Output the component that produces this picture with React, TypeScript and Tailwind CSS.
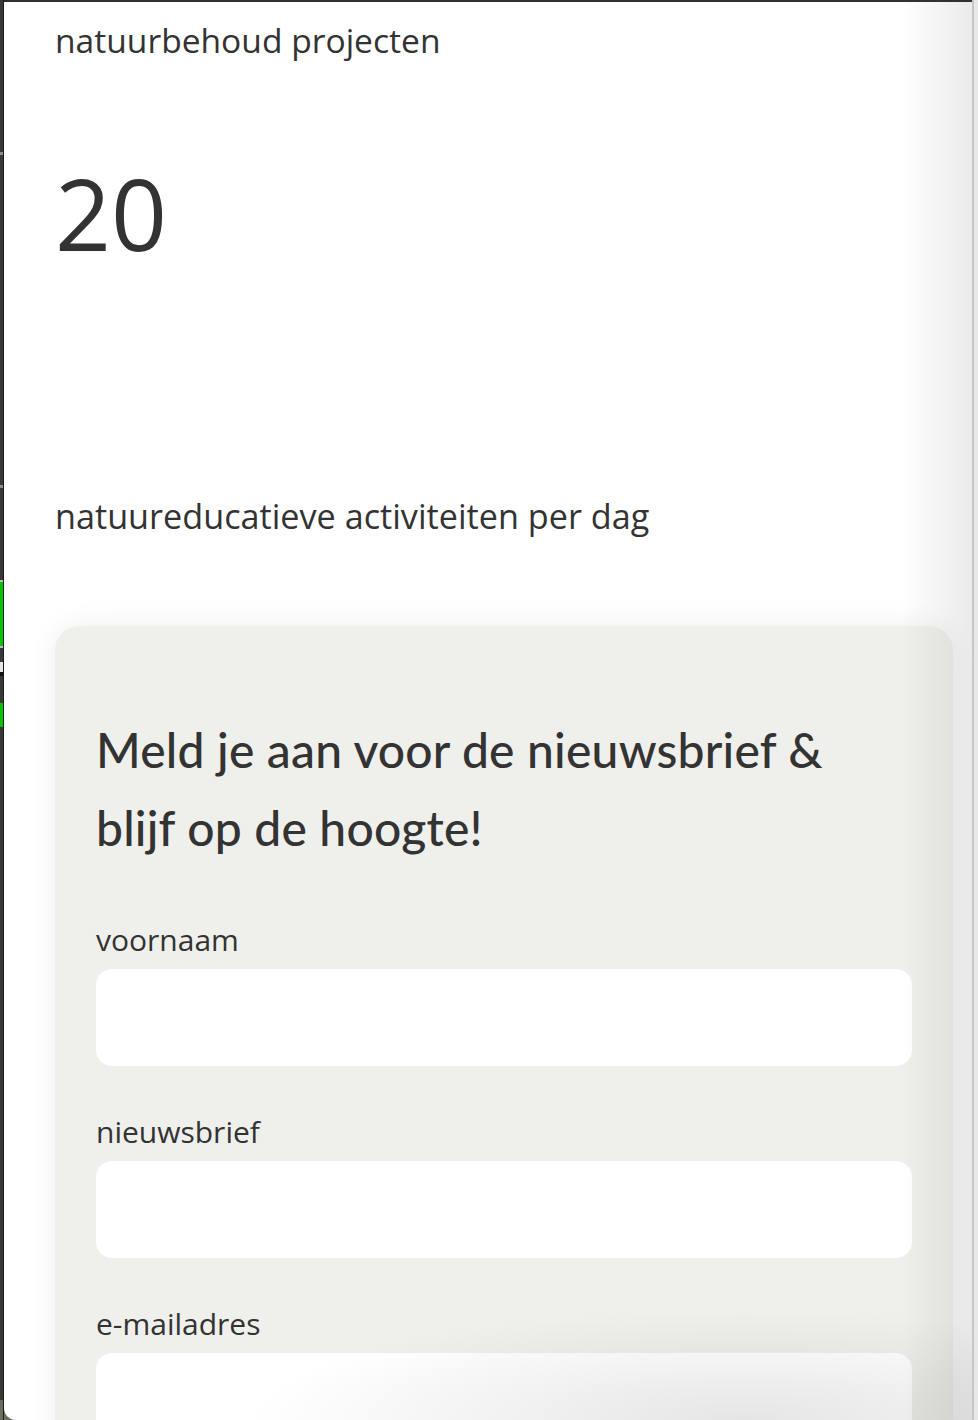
import React from 'react';

// Linker rand: stukje van het venster erachter
const RAND_SEGMENTEN = [
  { h: 'h-[152px]', kleur: 'bg-[#383838]' },
  { h: 'h-[3px]', kleur: 'bg-[#8a8a8a]' },
  { h: 'h-[330px]', kleur: 'bg-[#383838]' },
  { h: 'h-[3px]', kleur: 'bg-[#8a8a8a]' },
  { h: 'h-[92px]', kleur: 'bg-[#383838]' },
  { h: 'h-[2px]', kleur: 'bg-[#bdbdbd]' },
  { h: 'h-[64px]', kleur: 'bg-[#00c400]' },
  { h: 'h-[2px]', kleur: 'bg-[#bdbdbd]' },
  { h: 'h-[14px]', kleur: 'bg-[#383838]' },
  { h: 'h-[10px]', kleur: 'bg-[#e6e6e6]' },
  { h: 'h-[4px]', kleur: 'bg-[#111111]' },
  { h: 'h-[27px]', kleur: 'bg-[#383838]' },
  { h: 'h-[24px]', kleur: 'bg-[#00c400]' },
  { h: 'h-[673px]', kleur: 'bg-[#383838]' },
  { h: 'h-[20px]', kleur: 'bg-[#6b6e5f]' },
];

const VELDEN = ['voornaam', 'nieuwsbrief', 'e-mailadres'];

const App = () => {
  return (
    <div className="h-[1420px] w-[978px] overflow-hidden flex bg-[#6b6e5f] text-[#333333] font-['Open_Sans',sans-serif]">
      {/* Rand links */}
      <div className="w-[4px] flex flex-col border-r border-[#1c1c1c] shrink-0">
        {RAND_SEGMENTEN.map((s, i) => (
          <div key={i} className={`${s.h} ${s.kleur} shrink-0`}></div>
        ))}
      </div>

      {/* Paneel */}
      <div className="relative flex-1 bg-white border-t-2 border-[#2f3133] rounded-bl-[12px] overflow-hidden pl-[51px] pr-[19px]">
        <p className="text-[33.6px] leading-[51px] pt-[13px]">natuurbehoud projecten</p>

        <p className="text-[98px] leading-[115px] mt-[90px]">20</p>

        <p className="text-[34.2px] leading-[51px] mt-[219px]">natuureducatieve activiteiten per dag</p>

        {/* Nieuwsbrief kaart */}
        <div className="mt-[85px] bg-[#efefeb] rounded-[24px] px-[41px] pt-[85px] pb-10 shadow-[0_0_30px_rgba(0,0,0,0.07)]">
          <h2 className="font-['Lato',sans-serif] font-medium text-[48px] leading-[78px] tracking-[0.2px]">
            Meld je aan voor de nieuwsbrief &amp; blijf op de hoogte!
          </h2>

          <div className="mt-[53px] flex flex-col gap-[46px]">
            {VELDEN.map(veld => (
              <div key={veld} className="flex flex-col gap-[9px]">
                <label className="text-[30px] leading-[40px]">{veld}</label>
                <input type="text" className="h-[97px] w-full bg-white rounded-[16px] outline-none" />
              </div>
            ))}
          </div>
        </div>

        {/* Schaduw rechts en onder */}
        <div className="absolute top-0 right-0 h-full w-[70px] bg-linear-to-r from-transparent to-black/[0.08] pointer-events-none"></div>
        <div className="absolute bottom-0 left-[200px] h-[120px] w-[900px] bg-[radial-gradient(ellipse_at_60%_100%,rgba(0,0,0,0.10),transparent_65%)] pointer-events-none"></div>
      </div>

      {/* Scrollbalk */}
      <div className="w-[6px] bg-[#e8e8e8] border-l-2 border-[#c6c6c6] shrink-0"></div>
    </div>
  );
};

export default App;
